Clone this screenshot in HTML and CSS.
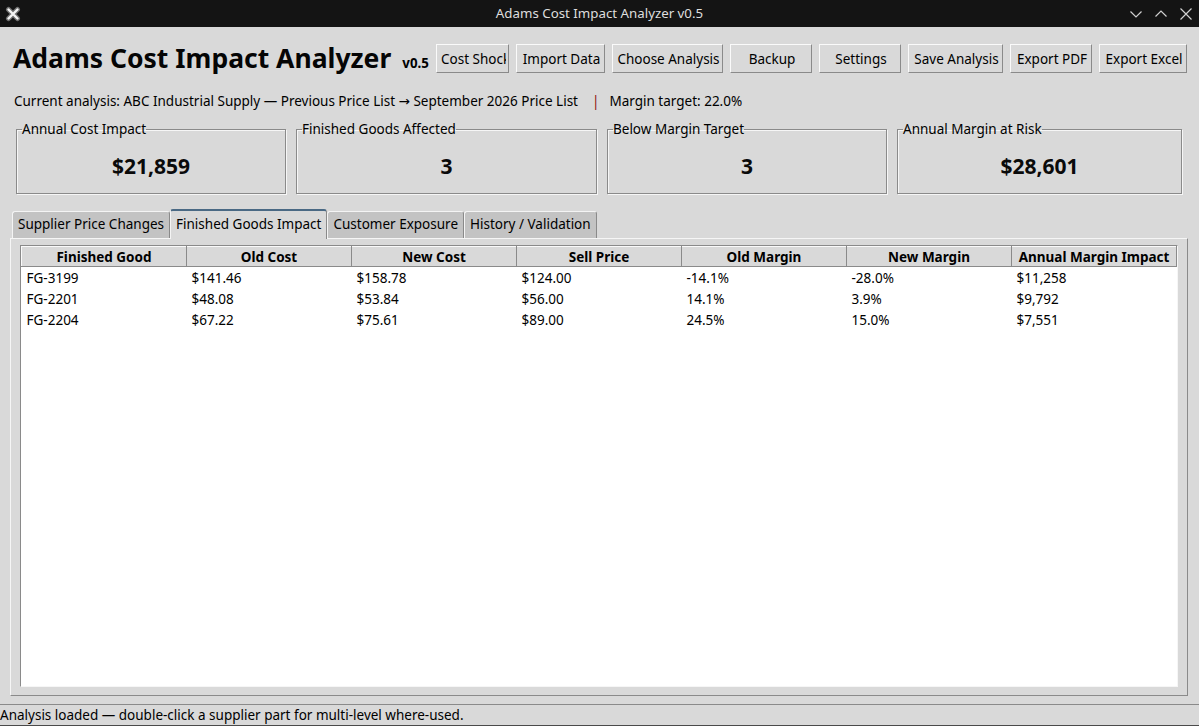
FILE: index.html
```html
<!DOCTYPE html>
<html lang="en">
<head>
<meta charset="utf-8">
<title>Adams Cost Impact Analyzer v0.5</title>
<link rel="stylesheet" href="styles.css">
</head>
<body>
<div class="window">
  <div class="titlebar">
    <div class="wm-icon">
      <svg width="16" height="16" viewBox="0 0 16 16">
        <path d="M3.5 3.5 L12.5 12.5 M12.5 3.5 L3.5 12.5" stroke="#6f6f6f" stroke-width="5" stroke-linecap="round"/>
        <path d="M3.5 3.5 L12.5 12.5 M12.5 3.5 L3.5 12.5" stroke="#f4f4f4" stroke-width="2.4" stroke-linecap="round"/>
      </svg>
    </div>
    <div class="wm-title">Adams Cost Impact Analyzer v0.5</div>
    <div class="wm-controls">
      <svg width="14" height="14" viewBox="0 0 14 14"><path d="M1.5 4.5 L7 10 L12.5 4.5" fill="none" stroke="#d0d0d0" stroke-width="1.2"/></svg>
      <svg width="14" height="14" viewBox="0 0 14 14"><path d="M1.5 9.5 L7 4 L12.5 9.5" fill="none" stroke="#d0d0d0" stroke-width="1.2"/></svg>
      <svg width="14" height="14" viewBox="0 0 14 14"><path d="M1.5 1.5 L12.5 12.5 M12.5 1.5 L1.5 12.5" fill="none" stroke="#d0d0d0" stroke-width="1.2"/></svg>
    </div>
  </div>

  <div class="app">
    <header class="toolbar">
      <h1 class="app-title">Adams Cost Impact Analyzer</h1>
      <span class="version">v0.5</span>
      <div class="actions">
        <button class="btn"><span>Cost Shock</span></button>
        <button class="btn"><span>Import Data</span></button>
        <button class="btn"><span>Choose Analysis</span></button>
        <button class="btn"><span>Backup</span></button>
        <button class="btn"><span>Settings</span></button>
        <button class="btn"><span>Save Analysis</span></button>
        <button class="btn"><span>Export PDF</span></button>
        <button class="btn"><span>Export Excel</span></button>
      </div>
    </header>

    <div class="info">
      <span>Current analysis: ABC Industrial Supply — Previous Price List → September 2026 Price List</span><span class="sep">|</span><span>Margin target: 22.0%</span>
    </div>

    <div class="cards">
      <fieldset class="card"><legend>Annual Cost Impact</legend><div class="card-value">$21,859</div></fieldset>
      <fieldset class="card"><legend>Finished Goods Affected</legend><div class="card-value">3</div></fieldset>
      <fieldset class="card"><legend>Below Margin Target</legend><div class="card-value">3</div></fieldset>
      <fieldset class="card"><legend>Annual Margin at Risk</legend><div class="card-value">$28,601</div></fieldset>
    </div>

    <div class="notebook">
      <div class="tabs">
        <div class="tab">Supplier Price Changes</div>
        <div class="tab active">Finished Goods Impact</div>
        <div class="tab">Customer Exposure</div>
        <div class="tab">History / Validation</div>
      </div>
      <div class="pane">
        <div class="tree">
          <table class="grid">
            <colgroup>
              <col class="c"><col class="c"><col class="c"><col class="c"><col class="c"><col class="c"><col class="c">
            </colgroup>
            <thead>
              <tr>
                <th>Finished Good</th><th>Old Cost</th><th>New Cost</th><th>Sell Price</th><th>Old Margin</th><th>New Margin</th><th>Annual Margin Impact</th>
              </tr>
            </thead>
            <tbody>
              <tr><td>FG-3199</td><td>$141.46</td><td>$158.78</td><td>$124.00</td><td>-14.1%</td><td>-28.0%</td><td>$11,258</td></tr>
              <tr><td>FG-2201</td><td>$48.08</td><td>$53.84</td><td>$56.00</td><td>14.1%</td><td>3.9%</td><td>$9,792</td></tr>
              <tr><td>FG-2204</td><td>$67.22</td><td>$75.61</td><td>$89.00</td><td>24.5%</td><td>15.0%</td><td>$7,551</td></tr>
            </tbody>
          </table>
        </div>
      </div>
    </div>

    <div class="status">Analysis loaded — double-click a supplier part for multi-level where-used.</div>
  </div>
</div>
</body>
</html>
```

FILE: styles.css
```css
* { box-sizing: border-box; }

html, body {
  margin: 0;
  padding: 0;
}

body {
  width: 1199px;
  height: 726px;
  overflow: hidden;
  background: #d9d9d9;
  font-family: "Noto Sans", "DejaVu Sans", sans-serif;
  font-size: 13.5px;
  color: #000;
}

/* window manager frame */
.titlebar {
  height: 27px;
  background: #141414;
  display: grid;
  grid-template-columns: 1fr auto 1fr;
  align-items: center;
}

.wm-icon {
  padding-left: 5px;
  display: flex;
  align-items: center;
}

.wm-title {
  color: #dedede;
  font-size: 13.3px;
  line-height: 27px;
}

.wm-controls {
  justify-self: end;
  display: flex;
  gap: 11px;
  padding-right: 6px;
  align-items: center;
}

.wm-controls svg { display: block; }

/* application body */
.app {
  display: flex;
  flex-direction: column;
}

.toolbar {
  display: flex;
  align-items: center;
  height: 29px;
  margin-top: 17px;
  padding: 0 12px 0 13px;
}

.app-title {
  margin: 0;
  font-size: 26.5px;
  font-weight: 700;
  line-height: 29px;
  white-space: nowrap;
  color: #050505;
}

.version {
  font-size: 13.3px;
  font-weight: 700;
  margin-left: 11px;
  margin-top: 8px;
}

.actions {
  margin-left: auto;
  display: grid;
  grid-template-columns: 73px 89px 111px 82px 82px 95px 82px 88px;
  gap: 7px;
}

.btn {
  height: 29px;
  padding: 0 2px 0 4px;
  background: #d9d9d9;
  border: 1px solid;
  border-color: #fafafa #8a8a8a #8a8a8a #fafafa;
  border-radius: 0;
  font: inherit;
  color: #000;
}

.btn > span {
  display: block;
  overflow: hidden;
  white-space: nowrap;
  text-align: center;
}

.info {
  margin-top: 19px;
  padding-left: 14px;
  line-height: 19px;
  white-space: nowrap;
}

.sep {
  color: #8b1010;
  margin: 0 10px 0 14px;
}

/* summary labelframes */
.cards {
  display: grid;
  grid-template-columns: 270px 301px 280px 285px;
  gap: 10px;
  margin: 9px 0 0 16px;
}

.card {
  margin: 0;
  padding: 0;
  min-width: 0;
  border: 1px solid #8a8a8a;
  box-shadow: 1px 1px 0 #f6f6f6, inset 1px 1px 0 #f6f6f6;
}

.card legend {
  padding: 0;
  margin-left: 5px;
  line-height: 19px;
}

.card-value {
  height: 54px;
  line-height: 54px;
  text-align: center;
  font-size: 21px;
  font-weight: 700;
  color: #0a0a0a;
}

/* notebook */
.notebook {
  margin: 15px 11px 0 10px;
}

.tabs {
  display: flex;
  align-items: flex-end;
  height: 29px;
  padding-left: 2px;
}

.tab {
  height: 27px;
  line-height: 25px;
  padding: 0 5px;
  background: #c3c3c3;
  border: 1px solid;
  border-bottom: none;
  border-color: #f4f4f4 #8a8a8a transparent #f4f4f4;
  border-radius: 3px 3px 0 0;
  white-space: nowrap;
}

.tab.active {
  position: relative;
  z-index: 1;
  height: 30px;
  margin-bottom: -1px;
  background: #d9d9d9;
  border-top: 2px solid #4a6984;
  line-height: 27px;
}

.pane {
  height: 458px;
  border: 1px solid;
  border-color: #f6f6f6 #8a8a8a #8a8a8a #f6f6f6;
  padding: 6px 9px 8px;
}

.tree {
  height: 100%;
  background: #fff;
  border: 1px solid;
  border-color: #8a8a8a #f6f6f6 #f6f6f6 #8a8a8a;
}

.grid {
  border-collapse: collapse;
  table-layout: fixed;
  width: 1156px;
}

.grid col.c { width: 165px; }

.grid th {
  height: 20px;
  padding: 0;
  background: #d9d9d9;
  border: 1px solid;
  border-color: #fafafa #8a8a8a #8a8a8a #fafafa;
  font-weight: 700;
  text-align: center;
  white-space: nowrap;
  line-height: 18px;
}

.grid td {
  height: 21px;
  padding: 0 5px;
  line-height: 21px;
  white-space: nowrap;
}

.grid tbody tr:first-child td { padding-top: 1px; }

/* status line */
.status {
  margin-top: 8px;
  height: 22px;
  line-height: 20px;
  border-top: 1px solid #8a8a8a;
  border-bottom: 1px solid #4a4a4a;
  white-space: nowrap;
}
```
